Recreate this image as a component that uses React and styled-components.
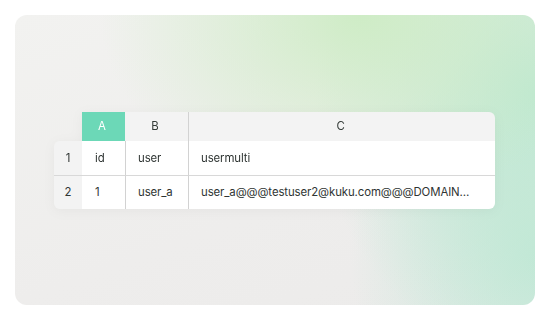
import styled, { createGlobalStyle } from "styled-components";

const GlobalStyle = createGlobalStyle`
  html, body {
    margin: 0;
    padding: 0;
    background: #ffffff;
  }
  body {
    font-family: Inter, "Noto Sans", sans-serif;
  }
`;

const Page = styled.div`
  width: 550px;
  height: 320px;
  padding: 15px;
  box-sizing: border-box;
`;

// soft gradient card
const Card = styled.div`
  height: 100%;
  border-radius: 12px;
  display: flex;
  align-items: center;
  justify-content: center;
  background:
    radial-gradient(ellipse 260px 190px at 345px 0px, rgba(205, 236, 196, 0.95), rgba(205, 236, 196, 0) 100%),
    radial-gradient(ellipse 220px 260px at 520px 80px, rgba(190, 232, 210, 1), rgba(190, 232, 210, 0) 100%),
    radial-gradient(ellipse 190px 220px at 525px 240px, rgba(195, 232, 216, 1), rgba(195, 232, 216, 0) 100%),
    linear-gradient(160deg, #f2f2f0 0%, #eeedec 60%, #ecebea 100%);
`;

const Sheet = styled.div`
  width: 441px;
  margin-right: 1px;
  display: grid;
  grid-template-columns: 28px 43px 63px 1fr;
  grid-template-rows: 29px 34px 34px;
  font-size: 11.4px;
  letter-spacing: -0.1px;
  color: #2f3533;
  filter: drop-shadow(0 2px 6px rgba(0, 0, 0, 0.04));
`;

const Corner = styled.div``;

const HeadCell = styled.div`
  display: flex;
  align-items: center;
  justify-content: center;
  padding-right: 3px;
  background: ${(p) => (p.$active ? "#6cd8b7" : "#f3f3f3")};
  color: ${(p) => (p.$active ? "#ffffff" : "#333a37")};
  border-left: ${(p) => (p.$line ? "1px solid #d2d2d2" : "none")};
  border-top-right-radius: ${(p) => (p.$last ? "6px" : "0")};
`;

const RowNum = styled.div`
  display: flex;
  align-items: center;
  justify-content: center;
  background: #f3f3f3;
  border-top: ${(p) => (p.$divider ? "1px solid #d8d8d8" : "none")};
  border-top-left-radius: ${(p) => (p.$first ? "6px" : "0")};
  border-bottom-left-radius: ${(p) => (p.$lastRow ? "6px" : "0")};
`;

const Cell = styled.div`
  display: flex;
  align-items: center;
  min-width: 0;
  padding: 0 4px 0 ${(p) => (p.$first ? "13px" : "12px")};
  background: #ffffff;
  border-left: ${(p) => (p.$line ? "1px solid #d2d2d2" : "none")};
  border-top: ${(p) => (p.$divider ? "1px solid #d8d8d8" : "none")};
  border-bottom-right-radius: ${(p) => (p.$corner ? "6px" : "0")};
`;

const CellText = styled.span`
  white-space: nowrap;
  overflow: hidden;
  text-overflow: ellipsis;
`;

const rows = [
  ["id", "user", "usermulti"],
  ["1", "user_a", "user_a@@@testuser2@kuku.com@@@DOMAIN…"],
];

const App = () => {
  return (
    <Page>
      <GlobalStyle />
      <Card>
        <Sheet>
          <Corner />
          <HeadCell $active>A</HeadCell>
          <HeadCell>B</HeadCell>
          <HeadCell $line $last>
            C
          </HeadCell>
          {rows.map((row, i) => [
            <RowNum
              key={`n${i}`}
              $first={i === 0}
              $lastRow={i === rows.length - 1}
              $divider={i > 0}
            >
              {i + 1}
            </RowNum>,
            ...row.map((val, j) => (
              <Cell
                key={`c${i}-${j}`}
                $first={j === 0}
                $line={j > 0}
                $divider={i > 0}
                $corner={i === rows.length - 1 && j === row.length - 1}
              >
                <CellText>{val}</CellText>
              </Cell>
            )),
          ])}
        </Sheet>
      </Card>
    </Page>
  );
};

export default App;
